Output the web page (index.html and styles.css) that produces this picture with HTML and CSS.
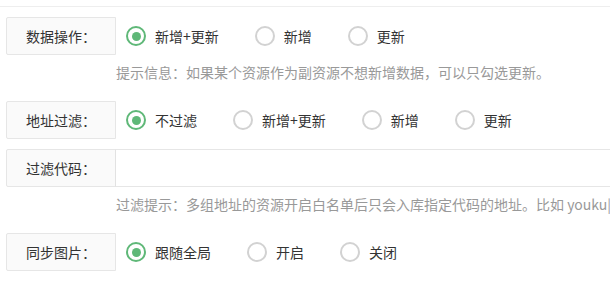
FILE: index.html
```html
<!DOCTYPE html>
<html lang="zh-CN">
<head>
<meta charset="utf-8">
<link rel="stylesheet" href="styles.css">
</head>
<body>
<div class="page">
  <div class="topline"></div>
  <div class="form">
    <div class="item">
      <div class="label">数据操作：</div>
      <div class="options">
        <div class="radio on"><span class="dot"></span><span class="txt">新增+更新</span></div>
        <div class="radio"><span class="dot"></span><span class="txt">新增</span></div>
        <div class="radio"><span class="dot"></span><span class="txt">更新</span></div>
      </div>
    </div>
    <div class="hint">提示信息：如果某个资源作为副资源不想新增数据，可以只勾选更新。</div>
    <div class="item">
      <div class="label">地址过滤：</div>
      <div class="options">
        <div class="radio on"><span class="dot"></span><span class="txt">不过滤</span></div>
        <div class="radio"><span class="dot"></span><span class="txt">新增+更新</span></div>
        <div class="radio"><span class="dot"></span><span class="txt">新增</span></div>
        <div class="radio"><span class="dot"></span><span class="txt">更新</span></div>
      </div>
    </div>
    <div class="item item-input">
      <div class="label">过滤代码：</div>
      <div class="input"></div>
    </div>
    <div class="hint">过滤提示：多组地址的资源开启白名单后只会入库指定代码的地址。比如 youku|iqiyi|qq</div>
    <div class="item">
      <div class="label">同步图片：</div>
      <div class="options">
        <div class="radio on"><span class="dot"></span><span class="txt">跟随全局</span></div>
        <div class="radio"><span class="dot"></span><span class="txt">开启</span></div>
        <div class="radio"><span class="dot"></span><span class="txt">关闭</span></div>
      </div>
    </div>
  </div>
</div>
</body>
</html>
```

FILE: styles.css
```css
html, body {
  margin: 0;
  padding: 0;
  background: #fff;
  overflow: hidden;
}
.page {
  width: 610px;
  height: 292px;
  overflow: hidden;
  font-family: "Noto Sans CJK SC", "Noto Sans", sans-serif;
  font-size: 14px;
  color: #333;
}
.topline {
  height: 6px;
  border-bottom: 1px solid #eeeeee;
}
.form {
  padding-left: 6px;
  padding-top: 10px;
}
.item {
  display: flex;
  align-items: center;
  height: 38px;
  margin: 0;
}
.item-input {
  margin-top: 10px;
}
.label {
  box-sizing: border-box;
  width: 110px;
  height: 38px;
  flex: none;
  border: 1px solid #e6e6e6;
  border-radius: 2px 0 0 2px;
  background: #fafafa;
  line-height: 36px;
  text-align: center;
  color: #333;
  white-space: nowrap;
}
.options {
  display: flex;
  align-items: center;
  padding-left: 10px;
}
.radio {
  display: flex;
  align-items: center;
  margin-right: 36px;
  line-height: 20px;
  white-space: nowrap;
}
.dot {
  box-sizing: border-box;
  width: 20px;
  height: 20px;
  border-radius: 50%;
  border: 2px solid #d2d2d2;
  margin-right: 9px;
  display: flex;
  align-items: center;
  justify-content: center;
  flex: none;
}
.radio.on .dot {
  border-color: #5fb878;
}
.radio.on .dot::after {
  content: "";
  width: 9px;
  height: 9px;
  border-radius: 50%;
  background: #5fb878;
}
.txt {
  color: #333;
}
.input {
  flex: none;
  width: 520px;
  box-sizing: border-box;
  height: 38px;
  border: 1px solid #e6e6e6;
  border-left: 1px solid #e2e2e2;
  margin-left: -1px;
  background: #fff;
}
.hint {
  padding: 7px 0 19px 110px;
  line-height: 20px;
  height: 20px;
  color: #999;
  white-space: nowrap;
}
```
